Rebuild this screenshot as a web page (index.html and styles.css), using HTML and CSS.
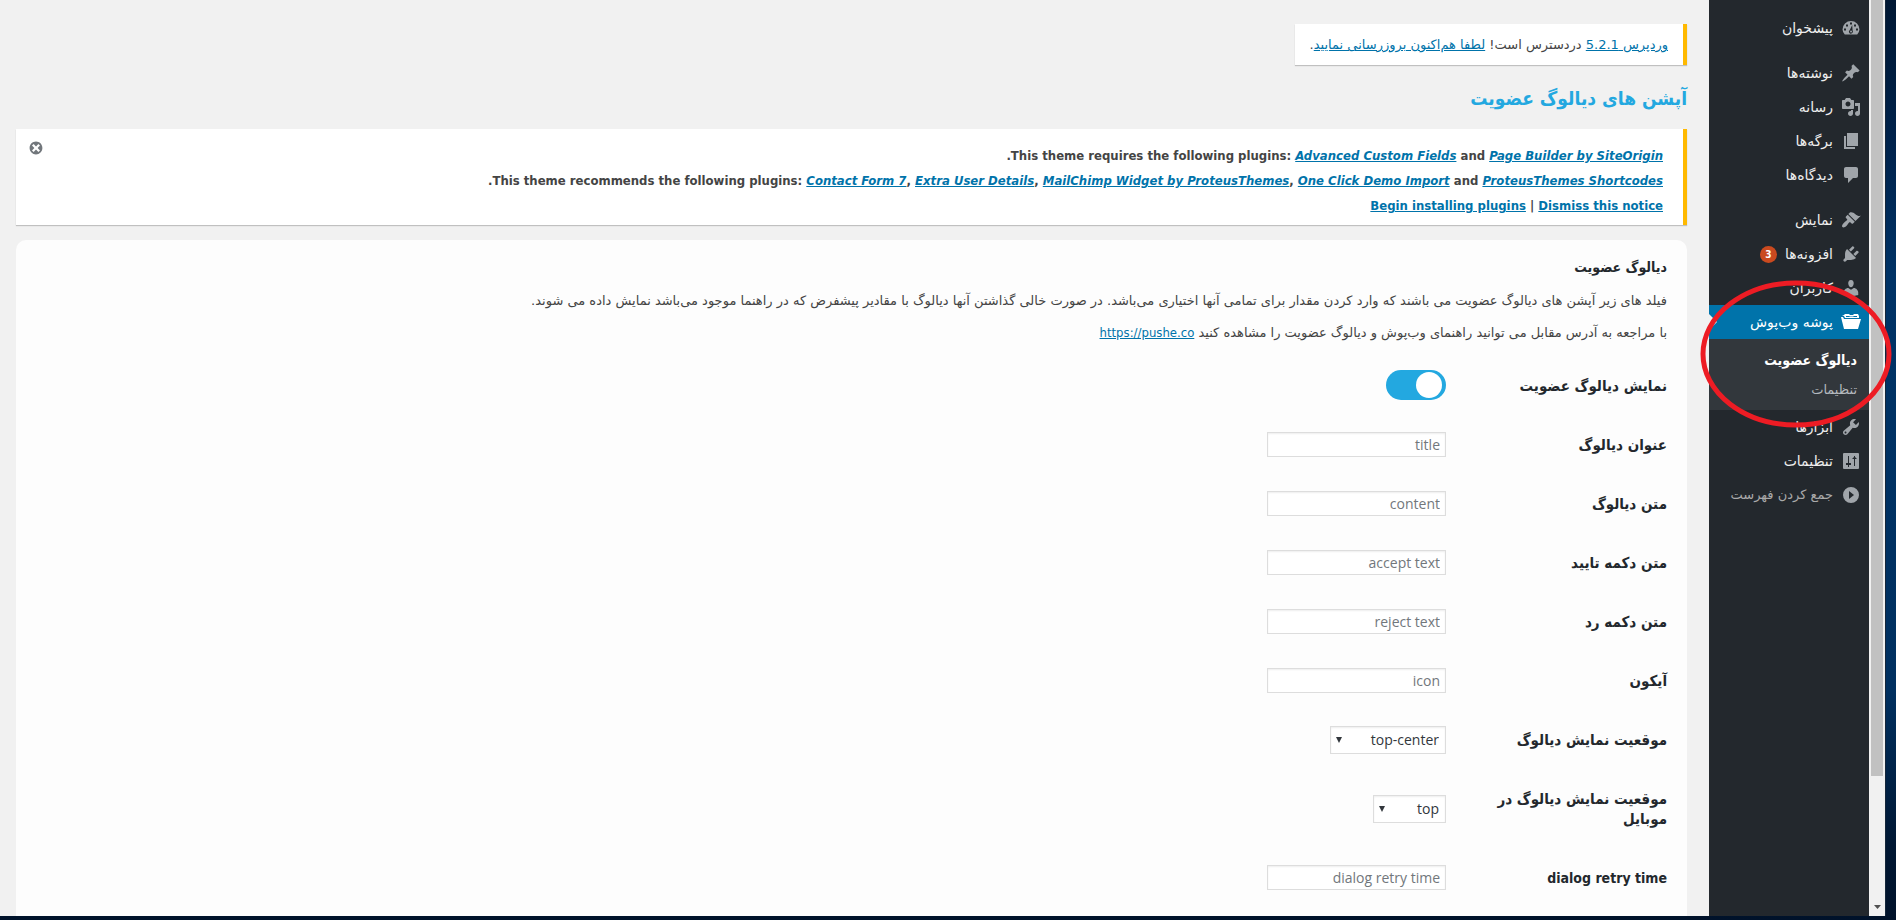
FILE: index.html
```html
<!DOCTYPE html>
<html lang="fa" dir="rtl">
<head>
<meta charset="utf-8">
<title>آپشن های دیالوگ عضویت</title>
<link rel="stylesheet" href="styles.css">
</head>
<body>
<div class="window">
  <div class="scrollbar"><div class="scroll-thumb"></div><svg class="scroll-arrow" viewBox="0 0 7 4"><path d="M0 0h7L3.500 4z"/></svg></div>
  <nav class="menu">
    <ul class="menu-group">
      <li><a class="menu-item" href="#"><svg class="icon" viewBox="0 0 20 20"><path fill-rule="evenodd" d="M3.760 16.500h12.480A8 8 0 0 0 18.500 11.500 8.500 8.500 0 0 0 1.500 11.500 8 8 0 0 0 3.760 16.500zM9 4.500h2v2H9zM5 6.500h2v2H5zM13 6.500h2v2h-2zM3 10.500h2v2H3zM15 10.500h2v2h-2zM11.200 7l.4 5.600a2 2 0 1 1-2.800-.6zM10 12.600a.9.9 0 1 0 .1 0z"/></svg>پیشخوان</a></li>
    </ul>
    <ul class="menu-group">
      <li><a class="menu-item" href="#"><svg class="icon" viewBox="0 0 20 20"><path d="M10.440 3.020l1.820-1.820 6.360 6.350-1.830 1.820c-1.050-.68-2.480-.57-3.410.36l-.75.75c-.92.93-1.040 2.350-.35 3.410l-1.830 1.820-2.410-2.410-2.800 2.790c-.42.42-3.380 2.710-3.800 2.290s1.860-3.390 2.280-3.810l2.790-2.790L4.100 9.360l1.830-1.820c1.050.69 2.480.57 3.400-.36l.75-.75c.93-.92 1.050-2.350.36-3.410z"/></svg>نوشته‌ها</a></li>
      <li><a class="menu-item" href="#"><svg class="icon" viewBox="0 0 20 20"><path d="M13 11V4c0-.55-.45-1-1-1h-1.670L9 1H5L3.670 3H2c-.55 0-1 .45-1 1v7c0 .55.45 1 1 1h10c.55 0 1-.45 1-1zM7 4.500c1.380 0 2.500 1.120 2.500 2.500S8.380 9.500 7 9.500 4.500 8.380 4.500 7 5.620 4.500 7 4.500zM14 6h5v10.500c0 1.380-1.120 2.500-2.500 2.500S14 17.880 14 16.500s1.120-2.500 2.500-2.500c.17 0 .34.020.5.050V9h-3V6zm-4 8.050V13h2v3.500c0 1.380-1.120 2.500-2.500 2.500S7 17.880 7 16.500 8.120 14 9.500 14c.17 0 .34.020.5.050z"/></svg>رسانه</a></li>
      <li><a class="menu-item" href="#"><svg class="icon" viewBox="0 0 20 20"><path d="M6 15V2h11v13H6zm-1 1h9v2H3V5h2v11z"/></svg>برگه‌ها</a></li>
      <li><a class="menu-item" href="#"><svg class="icon" viewBox="0 0 20 20"><path d="M5 2h10c1.100 0 2 .9 2 2v7c0 1.100-.9 2-2 2h-3l-5 5v-5H5c-1.100 0-2-.9-2-2V4c0-1.100.9-2 2-2z"/></svg>دیدگاه‌ها</a></li>
    </ul>
    <ul class="menu-group">
      <li><a class="menu-item" href="#"><svg class="icon" viewBox="0 0 20 20"><path d="M14.480 11.060L7.410 3.990l1.500-1.500c.5-.56 2.300-.47 3.510.32 1.210.8 1.430 1.280 2.910 2.100 1.180.64 2.450 1.260 4.450.85zm-.71.71L6.700 4.700 4.930 6.470c-.39.39-.39 1.020 0 1.410l1.060 1.060c.39.39.39 1.030 0 1.420-.6.6-1.430 1.110-2.210 1.690-.35.26-.7.53-1.010.84C1.430 14.230.4 16.080 1.400 17.070c.99 1 2.840-.03 4.180-1.360.31-.31.58-.66.85-1.020.57-.78 1.080-1.610 1.690-2.210.39-.39 1.020-.39 1.410 0l1.060 1.060c.39.39 1.020.39 1.410 0z"/></svg>نمایش</a></li>
      <li><a class="menu-item" href="#"><svg class="icon" viewBox="0 0 20 20"><path d="M13.110 4.360L9.870 7.600 8 5.730l3.240-3.240c.35-.34 1.050-.2 1.560.32.520.51.66 1.210.31 1.550zm-8 1.770l.91-1.120 9.010 9.010-1.190.84c-.71.71-2.630 1.160-3.820 1.160H6.140L4.900 17.260c-.59.59-1.540.59-2.120 0-.59-.58-.59-1.530 0-2.120l1.240-1.240v-3.880c0-1.130.4-3.190 1.090-3.890zm7.260 3.970l3.240-3.240c.34-.35 1.040-.21 1.550.31.520.51.66 1.210.31 1.550l-3.240 3.250z"/></svg>افزونه‌ها<span class="count">3</span></a></li>
      <li><a class="menu-item" href="#"><svg class="icon" viewBox="0 0 20 20"><path d="M10 9.250c-2.270 0-2.730-3.440-2.730-3.440C7 4.020 7.820 2 9.970 2c2.160 0 2.980 2.020 2.710 3.810 0 0-.41 3.440-2.680 3.440zm0 2.570L12.720 10c2.390 0 4.520 2.330 4.520 4.530v2.490s-3.650 1.130-7.240 1.130c-3.650 0-7.240-1.130-7.240-1.130v-2.490c0-2.250 1.940-4.480 4.470-4.480z"/></svg>کاربران</a></li>
      <li><a class="menu-item current" href="#"><svg class="icon" viewBox="0 0 20 20"><path fill-rule="evenodd" d="M3 7h17l-3 10H3L0 5h2zM1 4l2-1 1-1h4l1 1h3l1-1h4l1 2v2H4L3 4zM5 4v1h11V4h-3l-1 .5H9L8 4z"/></svg>پوشه وب‌پوش</a>
        <ul class="submenu">
          <li><a class="submenu-item active" href="#">دیالوگ عضویت</a></li>
          <li><a class="submenu-item" href="#">تنظیمات</a></li>
        </ul>
      </li>
      <li><a class="menu-item" href="#"><svg class="icon" viewBox="0 0 20 20"><path d="M16.680 9.770c-1.340 1.340-3.300 1.670-4.950.99l-5.410 6.520c-.99.99-2.590.99-3.580 0s-.99-2.590 0-3.570l6.520-5.420c-.68-1.650-.35-3.610.99-4.950 1.280-1.280 3.120-1.620 4.720-1.060l-2.890 2.890 2.820 2.820 2.860-2.870c.53 1.580.18 3.390-1.080 4.650zM3.810 16.210c.4.39 1.040.39 1.430 0 .4-.4.4-1.040 0-1.430-.39-.4-1.030-.4-1.430 0-.39.39-.39 1.030 0 1.430z"/></svg>ابزارها</a></li>
      <li><a class="menu-item" href="#"><svg class="icon" viewBox="0 0 20 20"><path fill-rule="evenodd" d="M3 2h14q1 0 1 1v14q0 1-1 1H3q-1 0-1-1V3q0-1 1-1zM7 5v7H5v2h2v2h1v-2h2v-2H8V5zM13 5v1l-2 2h2v7h1V8h2l-2-2V5z"/></svg>تنظیمات</a></li>
      <li><button class="menu-item collapse" type="button"><svg class="icon" viewBox="0 0 20 20"><path fill-rule="evenodd" d="M10 2a8 8 0 1 0 0 16 8 8 0 0 0 0-16zM8 6l5 4-5 4z"/></svg>جمع کردن فهرست</button></li>
    </ul>
  </nav>
  <main class="content">
    <div class="nag"><a href="#">وردپرس 5.2.1</a> دردسترس است! <a href="#">لطفا هم‌اکنون بروزرسانی نمایید</a>.</div>
    <h1>آپشن های دیالوگ عضویت</h1>
    <div class="notice">
      <button class="dismiss" type="button" aria-label="بستن"><svg viewBox="0 0 20 20"><path d="M10 2c4.420 0 8 3.580 8 8s-3.580 8-8 8-8-3.580-8-8 3.580-8 8-8zm5 11l-3-3 3-3-2-2-3 3-3-3-2 2 3 3-3 3 2 2 3-3 3 3z"/></svg></button>
      <p><bdi dir="ltr">.This theme requires the following plugins: <a href="#"><em>Advanced Custom Fields</em></a> and <a href="#"><em>Page Builder by SiteOrigin</em></a></bdi></p>
      <p><bdi dir="ltr">.This theme recommends the following plugins: <a href="#"><em>Contact Form 7</em></a>, <a href="#"><em>Extra User Details</em></a>, <a href="#"><em>MailChimp Widget by ProteusThemes</em></a>, <a href="#"><em>One Click Demo Import</em></a> and <a href="#"><em>ProteusThemes Shortcodes</em></a></bdi></p>
      <p><bdi dir="ltr"><a href="#">Begin installing plugins</a> | <a href="#">Dismiss this notice</a></bdi></p>
    </div>
    <form class="card">
      <h2>دیالوگ عضویت</h2>
      <p>فیلد های زیر آپشن های دیالوگ عضویت می باشند که وارد کردن مقدار برای تمامی آنها اختیاری می‌باشد. در صورت خالی گذاشتن آنها دیالوگ با مقادیر پیشفرض که در راهنما موجود می‌باشد نمایش داده می شوند.</p>
      <p>با مراجعه به آدرس مقابل می توانید راهنمای وب‌پوش و دیالوگ عضویت را مشاهده کنید <a class="url" href="#">https://pushe.co</a></p>
      <div class="fields">
        <div class="row"><label for="show">نمایش دیالوگ عضویت</label><input class="switch" id="show" type="checkbox" checked></div>
        <div class="row"><label for="title">عنوان دیالوگ</label><input class="text" id="title" type="text" placeholder="title"></div>
        <div class="row"><label for="body">متن دیالوگ</label><input class="text" id="body" type="text" placeholder="content"></div>
        <div class="row"><label for="accept">متن دکمه تایید</label><input class="text" id="accept" type="text" placeholder="accept text"></div>
        <div class="row"><label for="reject">متن دکمه رد</label><input class="text" id="reject" type="text" placeholder="reject text"></div>
        <div class="row"><label for="icon">آیکون</label><input class="text" id="icon" type="text" placeholder="icon"></div>
        <div class="row"><label for="pos">موقعیت نمایش دیالوگ</label><span class="select"><select id="pos"><option>top-center</option></select></span></div>
        <div class="row"><label for="mpos">موقعیت نمایش دیالوگ در موبایل</label><span class="select narrow"><select id="mpos"><option>top</option></select></span></div>
        <div class="row"><label class="latin" for="retry">dialog retry time</label><input class="text" id="retry" type="text" placeholder="dialog retry time"></div>
      </div>
    </form>
  </main>
</div>
<svg class="marker" viewBox="0 0 192 148"><ellipse cx="96" cy="74" rx="93" ry="71"/></svg>
</body>
</html>
```
FILE: styles.css
```css
* { box-sizing: border-box; }
body {
  margin: 0;
  height: 100vh;
  overflow: hidden;
  padding: 0 10px 4px 0;
  background: linear-gradient(#001733, #002550 18%, #003366 30%, #003060 75%, #001733 92%, #00122a);
  font: 13px/20px "DejaVu Sans", sans-serif;
  color: #444;
  position: relative;
}
a { color: #0073aa; }
.window { display: flex; height: 100%; background: #f1f1f1; overflow: hidden; }

.scrollbar {
  flex: none;
  width: 17px;
  padding: 0 2px 7px;
  background: #f1f1f1;
  border-right: 1px solid #14263a;
  display: flex;
  flex-direction: column;
  justify-content: space-between;
  align-items: center;
}
.scroll-thumb { width: 100%; height: calc(100% - 133px); background: #c1c1c1; }
.scroll-arrow { width: 7px; height: 4px; fill: #505050; }

.menu { flex: none; width: 160px; background: #23282d; }
.menu ul { list-style: none; margin: 0; padding: 0; }
.menu .menu-group { margin-top: 11px; }
.menu-item {
  display: flex;
  align-items: center;
  gap: 8px;
  width: 100%;
  height: 34px;
  padding: 0 8px 0 0;
  border: 0;
  background: none;
  color: #eee;
  font: 14px/18px "DejaVu Sans", sans-serif;
  text-decoration: none;
  white-space: nowrap;
}
.icon { flex: none; width: 20px; height: 20px; fill: #a0a5aa; }
.count {
  width: 17px;
  height: 17px;
  border-radius: 9px;
  background: #ca4a1f;
  color: #fff;
  font: bold 10px/17px "DejaVu Sans Condensed", sans-serif;
  text-align: center;
}
.current { background: #0073aa; color: #fff; position: relative; }
.current .icon { fill: #fff; }
.current::after {
  content: "";
  position: absolute;
  left: 0;
  top: 9px;
  border: 8px solid transparent;
  border-left-color: #f1f1f1;
}
.collapse { color: #aaa; font-size: 13px; }
.menu .submenu { background: #32373c; padding: 7px 0 6px; }
.submenu-item {
  display: block;
  padding: 5px 12px;
  line-height: 19px;
  color: #b4b9be;
  text-decoration: none;
}
.submenu-item.active { color: #fff; font-weight: bold; font-size: 14px; font-family: "DejaVu Sans Condensed", sans-serif; }

.content { flex: 1; min-width: 0; padding: 24px 22px 0 16px; }
.nag, .notice {
  background: #fff;
  border-right: 4px solid #ffb900;
  box-shadow: 0 1px 1px rgba(0, 0, 0, .2);
}
.nag { width: fit-content; padding: 11px 15px 10px; }
h1 {
  margin: 18px 0 16px;
  font: bold 19px/30px "DejaVu Sans Condensed", sans-serif;
  color: #23a8e0;
}
.notice {
  padding: 14px 20px 7px;
  position: relative;
  font-weight: bold;
  font-family: "DejaVu Sans Condensed", sans-serif;
}
.notice p { margin: 0; line-height: 25px; }
.dismiss { position: absolute; left: 12px; top: 11px; width: 16px; height: 16px; padding: 0; border: 0; background: none; }
.dismiss svg { display: block; width: 16px; height: 16px; fill: #72777c; }

.card {
  margin-top: 15px;
  padding: 18px 20px 0;
  min-height: 100vh;
  background: #fdfdfd;
  border-radius: 10px;
}
.card h2 { margin: 0 0 15px; font: bold 14px/18px "DejaVu Sans Condensed", sans-serif; color: #23282d; }
.card p { margin: 12px 0; line-height: 20px; }
.url { font-family: "DejaVu Sans Condensed", sans-serif; }
.row {
  display: grid;
  grid-template-columns: 221px 1fr;
  align-items: center;
  justify-items: start;
  padding: 15px 0;
}
.row label {
  width: 173px;
  padding: 5px 0 4px;
  font: bold 15px/20px "DejaVu Sans Condensed", sans-serif;
  color: #23282d;
}
.row .latin { font-size: 14px; }
.text, select {
  border: 1px solid #ddd;
  background: #fff;
  box-shadow: inset 0 1px 2px rgba(0, 0, 0, .07);
  font: 14px/19px "Open Sans", "Noto Sans", sans-serif;
  color: #32373c;
}
.text { width: 179px; height: 25px; padding: 0 5px; }
.text::placeholder { color: #72777c; opacity: 1; }
.select { display: block; position: relative; width: 116px; }
.select.narrow { width: 73px; }
.select::after { content: ""; position: absolute; left: 6px; top: 11px; border: 3px solid transparent; border-top: 6px solid #32373c; border-bottom: 0; }
select { display: block; width: 100%; height: 28px; padding: 0 6px; appearance: none; border-radius: 0; }
.switch {
  appearance: none;
  margin: 0;
  width: 60px;
  height: 30px;
  padding: 2px 4px;
  border-radius: 15px;
  background: #23a8e0;
}
.switch::before { content: ""; display: block; width: 26px; height: 26px; border-radius: 50%; background: #fff; }
.marker { position: absolute; right: 4px; top: 280px; width: 192px; height: 148px; pointer-events: none; }
.marker ellipse { fill: none; stroke: #ed1c24; stroke-width: 5px; }
```
